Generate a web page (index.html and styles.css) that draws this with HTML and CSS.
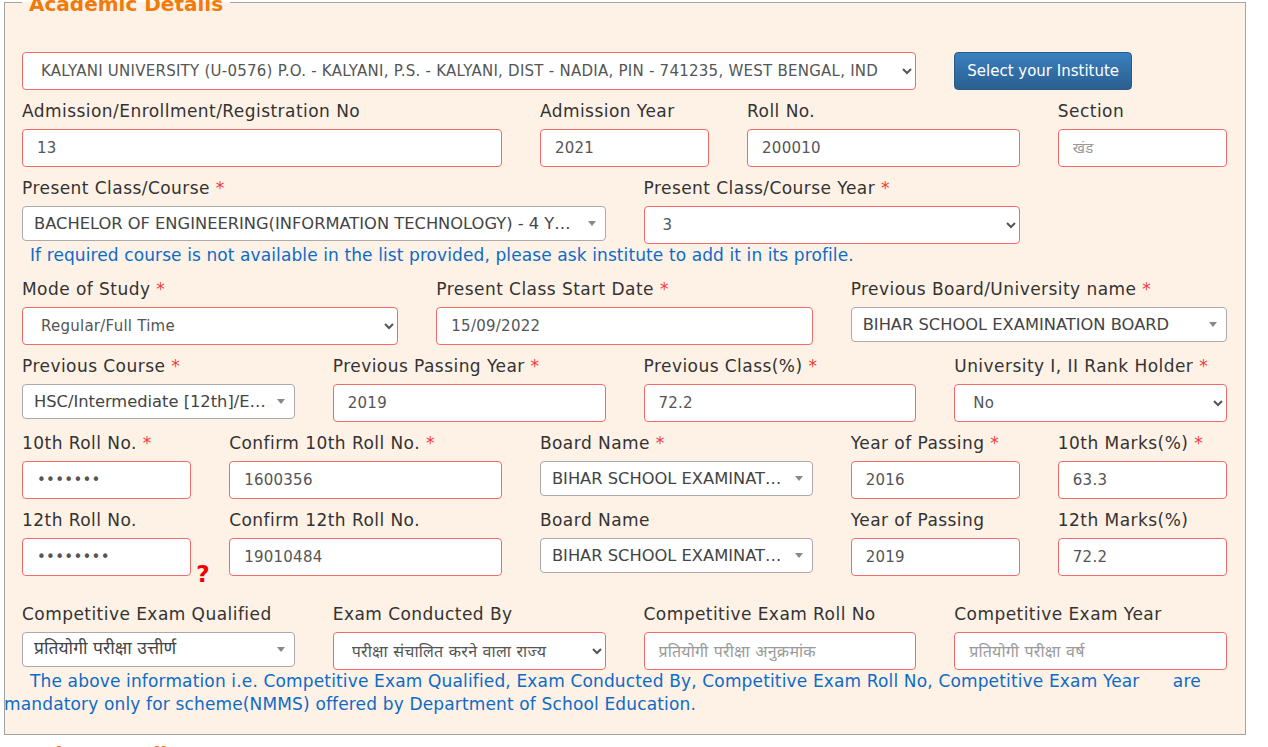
FILE: index.html
```html
<!DOCTYPE html>
<html lang="en">
<head>
<meta charset="utf-8">
<title>Academic Details</title>
<link rel="stylesheet" href="styles.css">
</head>
<body>
<div class="page">
  <fieldset class="panel">
    <legend>Academic Details</legend>

    <div class="row">
      <div class="field s9">
        <select class="ctl wide">
          <option>KALYANI UNIVERSITY (U-0576) P.O. - KALYANI, P.S. - KALYANI, DIST - NADIA, PIN - 741235, WEST BENGAL, INDIA</option>
        </select>
      </div>
      <div class="field s3">
        <button class="btn" type="button">Select your Institute</button>
      </div>
    </div>

    <div class="row">
      <div class="field s5">
        <label>Admission/Enrollment/Registration No</label>
        <input class="ctl" type="text" value="13">
      </div>
      <div class="field s2">
        <label>Admission Year</label>
        <input class="ctl" type="text" value="2021">
      </div>
      <div class="field s3">
        <label>Roll No.</label>
        <input class="ctl" type="text" value="200010">
      </div>
      <div class="field s2">
        <label>Section</label>
        <input class="ctl" type="text" placeholder="खंड">
      </div>
    </div>

    <div class="row tight">
      <div class="field s6">
        <label>Present Class/Course <span class="req">*</span></label>
        <div class="s2box"><span class="txt">BACHELOR OF ENGINEERING(INFORMATION TECHNOLOGY) - 4 YEARS</span><span class="arr"></span></div>
      </div>
      <div class="field s4">
        <label>Present Class/Course Year <span class="req">*</span></label>
        <select class="ctl"><option>3</option></select>
      </div>
    </div>
    <p class="note">If required course is not available in the list provided, please ask institute to add it in its profile.</p>

    <div class="row">
      <div class="field s4">
        <label>Mode of Study <span class="req">*</span></label>
        <select class="ctl"><option>Regular/Full Time</option></select>
      </div>
      <div class="field s4">
        <label>Present Class Start Date <span class="req">*</span></label>
        <input class="ctl" type="text" value="15/09/2022">
      </div>
      <div class="field s4">
        <label>Previous Board/University name <span class="req">*</span></label>
        <div class="s2box"><span class="txt">BIHAR SCHOOL EXAMINATION BOARD</span><span class="arr"></span></div>
      </div>
    </div>

    <div class="row">
      <div class="field s3">
        <label>Previous Course <span class="req">*</span></label>
        <div class="s2box"><span class="txt">HSC/Intermediate [12th]/Equivalent</span><span class="arr"></span></div>
      </div>
      <div class="field s3">
        <label>Previous Passing Year <span class="req">*</span></label>
        <input class="ctl" type="text" value="2019">
      </div>
      <div class="field s3">
        <label>Previous Class(%) <span class="req">*</span></label>
        <input class="ctl" type="text" value="72.2">
      </div>
      <div class="field s3">
        <label>University I, II Rank Holder <span class="req">*</span></label>
        <select class="ctl"><option>No</option></select>
      </div>
    </div>

    <div class="row">
      <div class="field s2">
        <label>10th Roll No. <span class="req">*</span></label>
        <input class="ctl" type="password" value="1600356">
      </div>
      <div class="field s3">
        <label>Confirm 10th Roll No. <span class="req">*</span></label>
        <input class="ctl" type="text" value="1600356">
      </div>
      <div class="field s3">
        <label>Board Name <span class="req">*</span></label>
        <div class="s2box"><span class="txt">BIHAR SCHOOL EXAMINATION BOARD</span><span class="arr"></span></div>
      </div>
      <div class="field s2">
        <label>Year of Passing <span class="req">*</span></label>
        <input class="ctl" type="text" value="2016">
      </div>
      <div class="field s2">
        <label>10th Marks(%) <span class="req">*</span></label>
        <input class="ctl" type="text" value="63.3">
      </div>
    </div>

    <div class="row">
      <div class="field s2">
        <label>12th Roll No.</label>
        <input class="ctl" type="password" value="19010484">
        <span class="help">?</span>
      </div>
      <div class="field s3">
        <label>Confirm 12th Roll No.</label>
        <input class="ctl" type="text" value="19010484">
      </div>
      <div class="field s3">
        <label>Board Name</label>
        <div class="s2box"><span class="txt">BIHAR SCHOOL EXAMINATION BOARD</span><span class="arr"></span></div>
      </div>
      <div class="field s2">
        <label>Year of Passing</label>
        <input class="ctl" type="text" value="2019">
      </div>
      <div class="field s2">
        <label>12th Marks(%)</label>
        <input class="ctl" type="text" value="72.2">
      </div>
    </div>

    <div class="row tight spaced">
      <div class="field s3">
        <label>Competitive Exam Qualified</label>
        <div class="s2box deva"><span class="txt">प्रतियोगी परीक्षा उत्तीर्ण</span><span class="arr"></span></div>
      </div>
      <div class="field s3">
        <label>Exam Conducted By</label>
        <select class="ctl deva"><option>परीक्षा संचालित करने वाला राज्य</option></select>
      </div>
      <div class="field s3">
        <label>Competitive Exam Roll No</label>
        <input class="ctl deva" type="text" placeholder="प्रतियोगी परीक्षा अनुक्रमांक">
      </div>
      <div class="field s3">
        <label>Competitive Exam Year</label>
        <input class="ctl deva" type="text" placeholder="प्रतियोगी परीक्षा वर्ष">
      </div>
    </div>
    <p class="mandatory">The above information i.e. Competitive Exam Qualified, Exam Conducted By, Competitive Exam Roll No, Competitive Exam Year&nbsp;&nbsp;&nbsp;&nbsp;&nbsp; are mandatory only for scheme(NMMS) offered by Department of School Education.</p>
  </fieldset>

  <fieldset class="panel next">
    <legend>Other Details</legend>
    <div class="row">
      <div class="field s4">
        <label>Bank Name</label>
        <input class="ctl" type="text">
      </div>
    </div>
  </fieldset>
</div>
</body>
</html>
```

FILE: styles.css
```css
* {
  box-sizing: border-box;
}

html,
body {
  margin: 0;
  background: #ffffff;
}

body {
  font-family: "DejaVu Sans", Verdana, "Noto Sans Devanagari", "Lohit Devanagari", "FreeSans", sans-serif;
  font-size: 16px;
  color: #333333;
}

.page {
  width: 1268px;
  margin-top: -12px;
}

.panel {
  margin: 0 0 0 4px;
  width: 1242px;
  min-width: 0;
  border: 1px solid #a3a3a3;
  background: #fef1e6;
  padding: 36px 18px 18px 17px;
}

.panel legend {
  color: #ef7b0c;
  font-weight: bold;
  font-size: 20px;
  line-height: 24px;
  padding: 4px 7px 0;
}

.panel.next {
  margin-top: 3px;
}

.row {
  display: grid;
  grid-template-columns: repeat(12, minmax(0, 1fr));
  column-gap: 38px;
}

.s2 { grid-column: span 2; }
.s3 { grid-column: span 3; }
.s4 { grid-column: span 4; }
.s5 { grid-column: span 5; }
.s6 { grid-column: span 6; }
.s9 { grid-column: span 9; }

.field {
  position: relative;
  margin-bottom: 10px;
  min-width: 0;
}

.row.tight .field {
  margin-bottom: 0;
}

.row.spaced {
  margin-top: 17px;
}

.field label {
  display: block;
  font-size: 17px;
  letter-spacing: 0.45px;
  line-height: 22px;
  margin-bottom: 7px;
  white-space: nowrap;
}

.req {
  color: #f03c3c;
}

.ctl {
  display: block;
  width: 100%;
  height: 38px;
  border: 1px solid #f26a6a;
  border-radius: 4px;
  background-color: #ffffff;
  font-family: inherit;
  font-size: 15px;
  letter-spacing: 0.25px;
  color: #555555;
  padding: 0 14px;
  margin: 0;
}

.ctl.deva {
  font-size: 16px;
}

.ctl::placeholder {
  color: #9a9a9a;
}

select.ctl {
  padding-left: 14px;
  padding-right: 8px;
}

select.ctl.wide {
  padding-right: 20px;
}

.btn {
  display: block;
  height: 38px;
  padding: 0 12px;
  font-family: inherit;
  font-size: 15px;
  color: #ffffff;
  background: linear-gradient(#3a80c0, #2a5f90);
  border: 1px solid #2a5a86;
  border-radius: 4px;
}

.s2box {
  display: flex;
  align-items: center;
  height: 35px;
  border: 1px solid #aaaaaa;
  border-radius: 4px;
  background: #ffffff;
  padding: 0 9px 0 11px;
  font-size: 16.3px;
  color: #444444;
}

.s2box.deva {
  font-size: 17.5px;
}

.s2box .txt {
  flex: 1;
  min-width: 0;
  overflow: hidden;
  white-space: nowrap;
  text-overflow: ellipsis;
}

.s2box .arr {
  flex: none;
  width: 0;
  height: 0;
  margin-left: 9px;
  border-left: 4px solid transparent;
  border-right: 4px solid transparent;
  border-top: 5px solid #888888;
}

.help {
  position: absolute;
  left: calc(100% + 5px);
  top: 52px;
  color: #ee0000;
  font-weight: bold;
  font-size: 23px;
  line-height: 26px;
}

.note {
  margin: 0 0 12px;
  padding-left: 8px;
  font-size: 17px;
  letter-spacing: 0.1px;
  line-height: 22px;
  color: #0d6bc6;
}

.mandatory {
  margin: 0 -18px 0 -18px;
  text-indent: 26px;
  font-size: 17px;
  letter-spacing: 0.15px;
  line-height: 23px;
  color: #0d6bc6;
}
```
